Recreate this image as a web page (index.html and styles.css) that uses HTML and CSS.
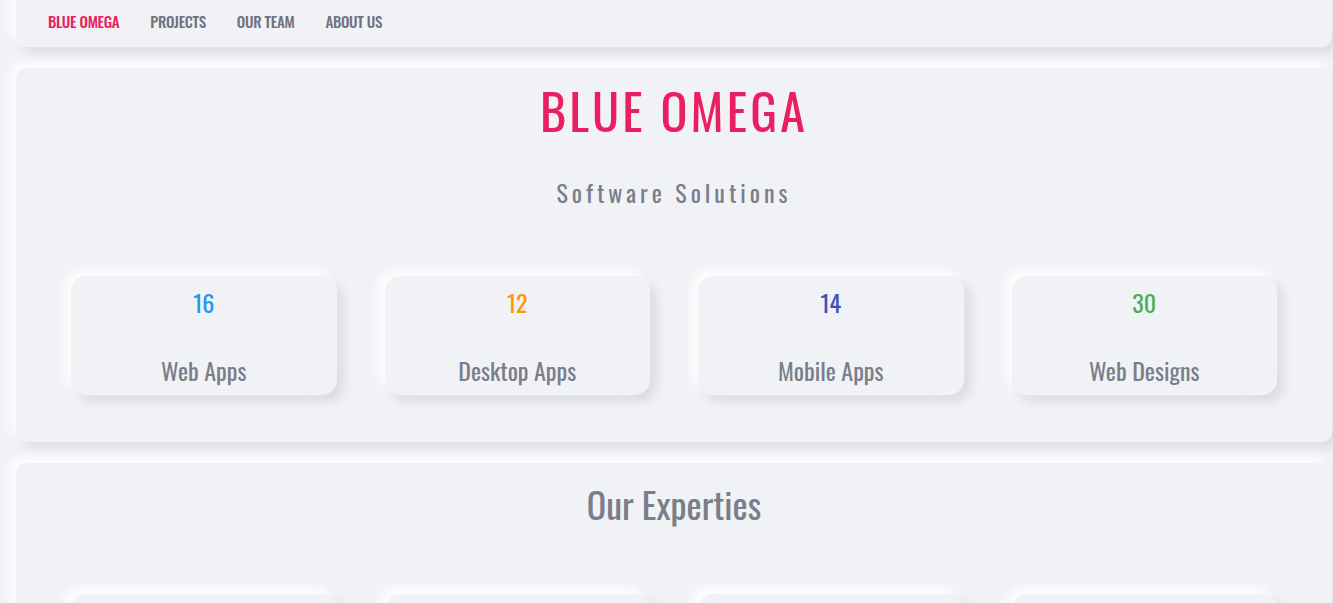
FILE: index.html
```html
<!DOCTYPE html>
<html lang="en">
<head>
<meta charset="utf-8">
<title>Blue Omega</title>
<link rel="stylesheet" href="styles.css">
</head>
<body>
<div class="page">
  <nav class="nav card">
    <a class="nav-link brand" href="#">Blue Omega</a>
    <a class="nav-link" href="#">Projects</a>
    <a class="nav-link" href="#">Our Team</a>
    <a class="nav-link" href="#">About Us</a>
  </nav>

  <section class="hero card">
    <h1 class="hero-title">BLUE OMEGA</h1>
    <p class="hero-sub">Software Solutions</p>
    <div class="stats">
      <div class="stat">
        <div class="stat-num blue">16</div>
        <div class="stat-label">Web Apps</div>
      </div>
      <div class="stat">
        <div class="stat-num orange">12</div>
        <div class="stat-label">Desktop Apps</div>
      </div>
      <div class="stat">
        <div class="stat-num indigo">14</div>
        <div class="stat-label">Mobile Apps</div>
      </div>
      <div class="stat">
        <div class="stat-num green">30</div>
        <div class="stat-label">Web Designs</div>
      </div>
    </div>
  </section>

  <section class="experties card">
    <h2 class="section-title">Our Experties</h2>
    <div class="stats">
      <div class="stat tall"></div>
      <div class="stat tall"></div>
      <div class="stat tall"></div>
      <div class="stat tall"></div>
    </div>
  </section>
</div>
</body>
</html>
```

FILE: styles.css
```css
html, body {
  margin: 0;
  padding: 0;
  background: #f1f2f6;
  overflow: hidden;
}

body {
  font-family: "Oswald", "Liberation Sans Narrow", "DejaVu Sans Condensed", "Roboto Condensed", sans-serif;
  color: #7a7e8a;
}

.page {
  padding: 0 1px 0 16px;
  display: flex;
  flex-direction: column;
  gap: 21px;
}

.card {
  background: #f1f2f6;
  border-radius: 10px;
  box-shadow: -6px -6px 12px rgba(255, 255, 255, 0.9), 6px 6px 12px rgba(0, 0, 0, 0.09);
}

.nav {
  margin-top: -12px;
  height: 59px;
  padding: 6px 32px 0;
  box-sizing: border-box;
  display: flex;
  align-items: center;
  gap: 31px;
}

.nav-link {
  text-decoration: none;
  text-transform: uppercase;
  font-size: 15px;
  font-weight: 500;
  color: #6f7280;
  letter-spacing: -0.3px;
}

.nav-link.brand {
  color: #e91e63;
}

.hero {
  height: 374px;
  padding: 0 55px;
  box-sizing: border-box;
  display: flex;
  flex-direction: column;
  align-items: stretch;
}

.hero-title {
  margin: 11px 0 0;
  text-align: center;
  font-size: 50px;
  font-weight: 400;
  letter-spacing: 3.2px;
  color: #e91e63;
  line-height: 60px;
}

.hero-sub {
  margin: 38px 0 0;
  text-align: center;
  font-size: 24px;
  font-weight: 400;
  letter-spacing: 4px;
  color: #7a7e8a;
  line-height: 30px;
}

.stats {
  display: grid;
  grid-template-columns: repeat(4, 1fr);
  gap: 48px;
}

.hero .stats {
  margin-top: 69px;
}

.stat {
  height: 119px;
  border-radius: 15px;
  background: #f1f2f6;
  box-shadow: -6px -6px 12px rgba(255, 255, 255, 0.95), 6px 6px 12px rgba(0, 0, 0, 0.1);
  display: flex;
  flex-direction: column;
  align-items: center;
}

.stat-num {
  margin-top: 11px;
  font-size: 24px;
  line-height: 30px;
}

.stat-label {
  margin-top: 38px;
  font-size: 24px;
  line-height: 30px;
  color: #7a7e8a;
}

.blue { color: #2196f3; }
.orange { color: #ff9800; }
.indigo { color: #3f51b5; }
.green { color: #4caf50; }

.experties {
  height: 400px;
  padding: 0 55px;
  box-sizing: border-box;
}

.section-title {
  margin: 19px 0 0;
  text-align: center;
  font-size: 36px;
  font-weight: 400;
  line-height: 44px;
  color: #7a7e8a;
}

.experties .stats {
  margin-top: 68px;
}

.stat.tall {
  height: 200px;
}
```
